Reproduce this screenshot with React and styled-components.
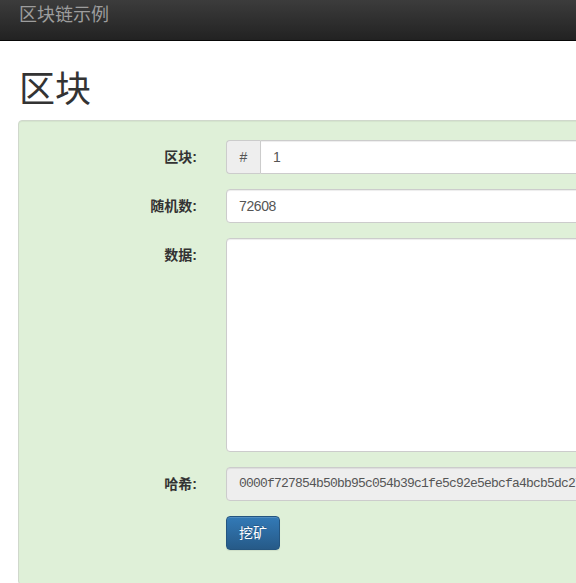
import styled, { createGlobalStyle } from "styled-components";

const GlobalStyle = createGlobalStyle`
  html, body {
    margin: 0;
    padding: 0;
    overflow: hidden;
    background: #fff;
  }
  body {
    font-family: "Liberation Sans", "Noto Sans CJK SC", sans-serif;
    font-size: 14px;
    line-height: 20px;
    color: #333;
  }
  * {
    box-sizing: border-box;
  }
`;

const Navbar = styled.div`
  height: 41px;
  background: linear-gradient(to bottom, #3c3c3c 0%, #222 100%);
  border-bottom: 1px solid #080808;
  padding-left: 19px;
`;

const Brand = styled.a`
  display: block;
  padding-top: 5px;
  font-size: 18px;
  line-height: 20px;
  color: #9d9d9d;
  text-decoration: none;
`;

const Container = styled.div`
  width: 1140px;
  padding-left: 18px;
`;

const Title = styled.h1`
  margin: 29px 0 10px 1px;
  font-size: 36px;
  font-weight: 400;
  line-height: 1.1;
  color: #333;
`;

const Well = styled.div`
  background: #dff0d8;
  border: 1px solid #d0d8cc;
  border-radius: 4px;
  padding: 19px;
  box-shadow: inset 0 1px 1px rgba(0, 0, 0, 0.05);
`;

const Row = styled.div`
  display: flex;
  align-items: flex-start;
  margin-bottom: 15px;
`;

const Label = styled.label`
  width: 159px;
  flex-shrink: 0;
  padding-top: 7px;
  text-align: right;
  font-weight: bold;
  color: #333;
`;

const Field = styled.div`
  margin-left: 29px;
  width: 800px;
  display: flex;
`;

const Addon = styled.span`
  width: 34px;
  height: 34px;
  display: flex;
  align-items: center;
  justify-content: center;
  background: #eee;
  border: 1px solid #ccc;
  border-right: 0;
  border-radius: 4px 0 0 4px;
  color: #555;
  font-size: 14px;
`;

const Input = styled.input`
  flex: 1;
  height: 34px;
  padding: 6px 12px;
  font-family: ${(p) =>
    p.$mono
      ? `"Liberation Mono", "DejaVu Sans Mono", monospace`
      : `"Liberation Sans", "Noto Sans CJK SC", sans-serif`};
  font-size: ${(p) => (p.$mono ? "13px" : "14px")};
  letter-spacing: ${(p) => (p.$mono ? "-0.8px" : "-0.4px")};
  color: #555;
  background: ${(p) => (p.readOnly ? "#eee" : "#fff")};
  border: 1px solid #ccc;
  border-radius: ${(p) => (p.$grouped ? "0 4px 4px 0" : "4px")};
  box-shadow: inset 0 1px 1px rgba(0, 0, 0, 0.075);
  outline: none;
`;

const TextArea = styled.textarea`
  flex: 1;
  height: 214px;
  padding: 6px 12px;
  font-family: "Liberation Sans", "Noto Sans CJK SC", sans-serif;
  font-size: 14px;
  color: #555;
  background: #fff;
  border: 1px solid #ccc;
  border-radius: 4px;
  box-shadow: inset 0 1px 1px rgba(0, 0, 0, 0.075);
  resize: none;
  outline: none;
`;

const Button = styled.button`
  height: 34px;
  padding: 6px 12px;
  font-family: "Liberation Sans", "Noto Sans CJK SC", sans-serif;
  font-size: 14px;
  line-height: 20px;
  color: #fff;
  background: linear-gradient(to bottom, #337ab7 0%, #265a88 100%);
  border: 1px solid #245580;
  border-radius: 4px;
  text-shadow: 0 -1px 0 rgba(0, 0, 0, 0.2);
  box-shadow: inset 0 1px 0 rgba(255, 255, 255, 0.15), 0 1px 1px rgba(0, 0, 0, 0.075);
  cursor: pointer;
`;

export default function App() {
  return (
    <>
      <GlobalStyle />
      <Navbar>
        <Brand href="#">区块链示例</Brand>
      </Navbar>
      <Container>
        <Title>区块</Title>
        <Well>
          <Row>
            <Label>区块:</Label>
            <Field>
              <Addon>#</Addon>
              <Input $grouped type="text" defaultValue="1" />
            </Field>
          </Row>
          <Row>
            <Label>随机数:</Label>
            <Field>
              <Input type="text" defaultValue="72608" />
            </Field>
          </Row>
          <Row>
            <Label>数据:</Label>
            <Field>
              <TextArea rows={10} />
            </Field>
          </Row>
          <Row>
            <Label>哈希:</Label>
            <Field>
              <Input
                $mono
                readOnly
                type="text"
                defaultValue="0000f727854b50bb95c054b39c1fe5c92e5ebcfa4bcb5dc279f56aa96a365e5a"
              />
            </Field>
          </Row>
          <Row>
            <Label />
            <Field>
              <Button>挖矿</Button>
            </Field>
          </Row>
        </Well>
      </Container>
    </>
  );
}
